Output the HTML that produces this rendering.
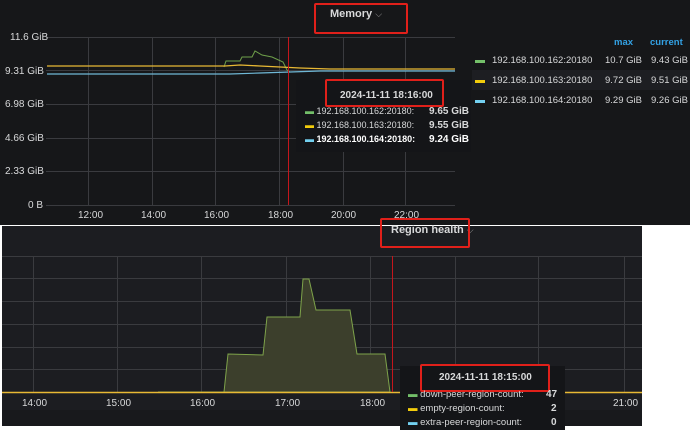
<!DOCTYPE html>
<html><head><meta charset="utf-8"><style>
body{margin:0;width:690px;height:430px;background:#fff;position:relative;overflow:hidden;font-family:"Liberation Sans","Noto Sans CJK SC",sans-serif}
.a{position:absolute}
.t{color:#d8d9da;font-size:10px;position:absolute;white-space:nowrap}
.l{font-size:9.5px}
.rb{position:absolute;border:2px solid #e0201a;border-radius:2px}
</style></head><body>
<div class="a" style="left:0;top:0;width:690px;height:225px;background:#161719"></div>
<div class="a" style="left:2px;top:226px;width:640px;height:200px;background:#1c1d21"></div>
<div class="a" style="left:2px;top:410px;width:640px;height:16px;background:#18191c"></div>
<svg class="a" style="left:0;top:0" width="690" height="430">
<g stroke="#3a3b3f" stroke-width="1">
<line x1="46" y1="37.5" x2="455" y2="37.5"/><line x1="46" y1="70.5" x2="455" y2="70.5"/><line x1="46" y1="104.5" x2="455" y2="104.5"/><line x1="46" y1="138.5" x2="455" y2="138.5"/><line x1="46" y1="171.5" x2="455" y2="171.5"/><line x1="46" y1="205.5" x2="455" y2="205.5"/>
<line x1="88.5" y1="37" x2="88.5" y2="205"/><line x1="152.5" y1="37" x2="152.5" y2="205"/><line x1="215.5" y1="37" x2="215.5" y2="205"/><line x1="279.5" y1="37" x2="279.5" y2="205"/><line x1="343.5" y1="37" x2="343.5" y2="205"/><line x1="405.5" y1="37" x2="405.5" y2="205"/>
<line x1="2" y1="256.5" x2="642" y2="256.5"/><line x1="2" y1="278.5" x2="642" y2="278.5"/><line x1="2" y1="301.5" x2="642" y2="301.5"/><line x1="2" y1="324.5" x2="642" y2="324.5"/><line x1="2" y1="347.5" x2="642" y2="347.5"/><line x1="2" y1="369.5" x2="642" y2="369.5"/>
<line x1="33.5" y1="256" x2="33.5" y2="392"/><line x1="117.5" y1="256" x2="117.5" y2="392"/><line x1="201.5" y1="256" x2="201.5" y2="392"/><line x1="286.5" y1="256" x2="286.5" y2="392"/><line x1="370.5" y1="256" x2="370.5" y2="392"/><line x1="455.5" y1="256" x2="455.5" y2="392"/><line x1="538.5" y1="256" x2="538.5" y2="392"/><line x1="624.5" y1="256" x2="624.5" y2="392"/>
</g>
<path d="M224 67 L226 61 L240 61 L242 57 L252 57 L255 51 L262 55 L272 57 L283 62 L287 70 L290 72" fill="none" stroke="#6fa04a" stroke-width="1"/>
<path d="M47 66 L225 66 L240 65 L260 66 L300 68 L330 69 L455 69" fill="none" stroke="#e8b934" stroke-width="1.3"/>
<path d="M47 74 L230 74 L260 73 L290 72 L320 71 L455 71" fill="none" stroke="#6fb8d6" stroke-width="1.2"/>
<line x1="288.5" y1="37" x2="288.5" y2="205" stroke="#c4161c" stroke-width="1"/>
<path d="M158 392 L224 392 L228 354 L263 355 L267 317 L300 317 L303 279 L309 279 L316 310 L350 310 L357 354 L385 354 L390 392 Z" fill="#3c3f2c" stroke="#7ea34a" stroke-width="1"/>
<line x1="2" y1="392.5" x2="642" y2="392.5" stroke="#e8b934" stroke-width="1.5"/>
<line x1="392.5" y1="256" x2="392.5" y2="392" stroke="#c4161c" stroke-width="1"/>
</svg>
<div class="t" style="left:10px;top:32px">11.6 GiB</div>
<div class="t" style="left:5px;top:66px">9.31 GiB</div>
<div class="t" style="left:5px;top:99px">6.98 GiB</div>
<div class="t" style="left:5px;top:133px">4.66 GiB</div>
<div class="t" style="left:5px;top:166px">2.33 GiB</div>
<div class="t" style="left:28px;top:200px">0 B</div>
<div class="t" style="left:78px;top:210px">12:00</div><div class="t" style="left:141px;top:210px">14:00</div><div class="t" style="left:204px;top:210px">16:00</div><div class="t" style="left:268px;top:210px">18:00</div><div class="t" style="left:331px;top:210px">20:00</div><div class="t" style="left:394px;top:210px">22:00</div>
<div class="t" style="left:330px;top:8px;font-size:11px;font-weight:bold">Memory <span style="font-weight:normal;color:#999;font-size:9px">⌵</span></div>
<div class="rb" style="left:314px;top:3px;width:90px;height:27px"></div>
<div class="t" style="left:614px;top:37px;color:#33a2e5;font-weight:bold;font-size:9.5px">max</div>
<div class="t" style="left:650px;top:37px;color:#33a2e5;font-weight:bold;font-size:9.5px">current</div>
<div class="a" style="left:472px;top:70px;width:218px;height:20px;background:#1d1e22"></div>
<div class="a" style="left:475px;top:60px;width:10px;height:3px;background:#73bf69"></div>
<div class="a" style="left:475px;top:80px;width:10px;height:3px;background:#f2cc0c"></div>
<div class="a" style="left:475px;top:100px;width:10px;height:3px;background:#73d0f0"></div>
<div class="t l" style="left:492px;top:55px">192.168.100.162:20180</div><div class="t l" style="left:605px;top:55px">10.7 GiB</div><div class="t l" style="left:651px;top:55px">9.43 GiB</div>
<div class="t l" style="left:492px;top:75px">192.168.100.163:20180</div><div class="t l" style="left:605px;top:75px">9.72 GiB</div><div class="t l" style="left:651px;top:75px">9.51 GiB</div>
<div class="t l" style="left:492px;top:95px">192.168.100.164:20180</div><div class="t l" style="left:605px;top:95px">9.29 GiB</div><div class="t l" style="left:651px;top:95px">9.26 GiB</div>
<div class="a" style="left:296px;top:80px;width:175px;height:72px;background:#141518"></div>
<div class="t" style="left:340px;top:90px;font-weight:bold">2024-11-11 18:16:00</div>
<div class="rb" style="left:325px;top:79px;width:115px;height:24px"></div>
<div class="t" style="left:305px;top:106px;font-size:9px"><span style="color:#73bf69">▬</span> 192.168.100.162:20180:</div><div class="t" style="left:429px;top:106px;font-weight:bold">9.65 GiB</div>
<div class="t" style="left:305px;top:120px;font-size:9px"><span style="color:#f2cc0c">▬</span> 192.168.100.163:20180:</div><div class="t" style="left:429px;top:120px;font-weight:bold">9.55 GiB</div>
<div class="t" style="left:305px;top:134px;font-size:9px;font-weight:bold;color:#fff"><span style="color:#73d0f0">▬</span> 192.168.100.164:20180:</div><div class="t" style="left:429px;top:134px;font-weight:bold;color:#fff">9.24 GiB</div>
<div class="t" style="left:391px;top:224px;font-size:11px;font-weight:bold">Region health <span style="font-weight:normal;color:#999;font-size:9px">⌵</span></div>
<div class="rb" style="left:380px;top:218px;width:86px;height:26px"></div>
<div class="t" style="left:22px;top:398px">14:00</div><div class="t" style="left:106px;top:398px">15:00</div><div class="t" style="left:190px;top:398px">16:00</div><div class="t" style="left:275px;top:398px">17:00</div><div class="t" style="left:360px;top:398px">18:00</div><div class="t" style="left:613px;top:398px">21:00</div>
<div class="a" style="left:400px;top:366px;width:165px;height:64px;background:#141518"></div>
<div class="t" style="left:439px;top:372px;font-weight:bold">2024-11-11 18:15:00</div>
<div class="rb" style="left:420px;top:364px;width:126px;height:24px"></div>
<div class="t" style="left:408px;top:389px;font-size:9.5px"><span style="color:#73bf69">▬</span> down-peer-region-count:</div><div class="t" style="left:546px;top:389px;font-weight:bold">47</div>
<div class="t" style="left:408px;top:403px;font-size:9.5px"><span style="color:#f2cc0c">▬</span> empty-region-count:</div><div class="t" style="left:551px;top:403px;font-weight:bold">2</div>
<div class="t" style="left:408px;top:417px;font-size:9.5px"><span style="color:#73d0f0">▬</span> extra-peer-region-count:</div><div class="t" style="left:551px;top:417px;font-weight:bold">0</div>
</body></html>
